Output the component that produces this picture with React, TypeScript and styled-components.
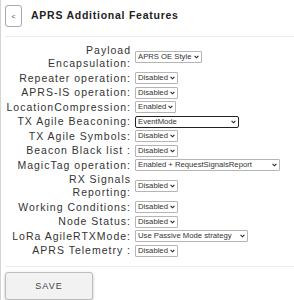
import React from "react";
import styled, { createGlobalStyle } from "styled-components";

const GlobalStyle = createGlobalStyle`
  html, body {
    margin: 0;
    padding: 0;
    background: #ffffff;
    font-family: "Liberation Sans", Arial, sans-serif;
  }
`;

const Page = styled.div`
  width: 294px;
  height: 300px;
  box-sizing: border-box;
  border-left: 1px solid #d4d4d4;
  padding: 5px 0 0 4px;
  overflow: hidden;
`;

const Header = styled.div`
  display: flex;
  align-items: center;
  gap: 9px;
  padding-bottom: 9px;
  border-bottom: 1px solid #ececec;
`;

const BackButton = styled.button`
  width: 17px;
  height: 22px;
  padding: 0;
  border: 1px solid #a8a8a8;
  border-radius: 3px;
  background: #ffffff;
  color: #555;
  font-size: 7px;
  font-family: "Liberation Sans", Arial, sans-serif;
`;

const Title = styled.h1`
  margin: 0 0 3px 0;
  font-size: 10.5px;
  font-weight: bold;
  letter-spacing: 0.75px;
  color: #222;
`;

const Form = styled.div`
  display: grid;
  grid-template-columns: 126px auto;
  column-gap: 4px;
  row-gap: 1.5px;
  align-items: center;
  padding: 7px 0 9px 0;
  border-bottom: 1px solid #ececec;
`;

const Label = styled.label`
  text-align: right;
  white-space: nowrap;
  font-size: 10.5px;
  line-height: 13px;
  letter-spacing: 1px;
  color: #333;
`;

const SelectBox = styled.div<{ $w: number; $focus?: boolean }>`
  position: relative;
  justify-self: start;
  width: ${(p) => p.$w}px;
  height: 12px;
  box-sizing: border-box;
  border: 1px solid ${(p) => (p.$focus ? "#222" : "#b5b5b5")};
  border-radius: ${(p) => (p.$focus ? "2px" : "1px")};
  background: #fff;
`;

const NativeSelect = styled.select`
  appearance: none;
  display: block;
  width: 100%;
  height: 10px;
  margin: 0;
  padding: 0 0 0 2px;
  border: none;
  outline: none;
  background: transparent;
  font-size: 7.7px;
  line-height: 10px;
  font-family: "Liberation Sans", Arial, sans-serif;
  color: #333;
`;

const Chevron = styled.svg`
  position: absolute;
  right: 2px;
  top: 3px;
  width: 5px;
  height: 4px;
  pointer-events: none;
`;

const SaveButton = styled.button`
  margin-top: 5px;
  width: 88px;
  height: 28px;
  border: 1px solid #bdbdbd;
  border-radius: 3px;
  background: #f2f2f2;
  box-shadow: 0 1px 3px rgba(0, 0, 0, 0.25);
  font-family: "Liberation Sans", Arial, sans-serif;
  font-size: 9px;
  letter-spacing: 1px;
  color: #444;
`;

type Row = { label: React.ReactNode; value: string; w: number; focus?: boolean };

const rows: Row[] = [
  { label: <>Payload<br />Encapsulation:</>, value: "APRS OE Style", w: 67 },
  { label: "Repeater operation:", value: "Disabled", w: 43 },
  { label: "APRS-IS operation:", value: "Disabled", w: 43 },
  { label: "LocationCompression:", value: "Enabled", w: 41 },
  { label: "TX Agile Beaconing:", value: "EventMode", w: 104, focus: true },
  { label: "TX Agile Symbols:", value: "Disabled", w: 43 },
  { label: "Beacon Black list :", value: "Disabled", w: 43 },
  { label: "MagicTag operation:", value: "Enabled + RequestSignalsReport", w: 145 },
  { label: <>RX Signals<br />Reporting:</>, value: "Disabled", w: 43 },
  { label: "Working Conditions:", value: "Disabled", w: 43 },
  { label: "Node Status:", value: "Disabled", w: 43 },
  { label: "LoRa AgileRTXMode:", value: "Use Passive Mode strategy", w: 113 },
  { label: "APRS Telemetry :", value: "Disabled", w: 43 },
];

function Dropdown({ value, w, focus }: { value: string; w: number; focus?: boolean }) {
  return (
    <SelectBox $w={w} $focus={focus}>
      <NativeSelect defaultValue={value}>
        <option>{value}</option>
      </NativeSelect>
      <Chevron viewBox="0 0 5 4">
        <path d="M0.6 0.8 L2.5 2.8 L4.4 0.8" fill="none" stroke="#222" strokeWidth="1.1" />
      </Chevron>
    </SelectBox>
  );
}

export default function App() {
  return (
    <>
      <GlobalStyle />
      <Page>
        <Header>
          <BackButton>&lt;</BackButton>
          <Title>APRS Additional Features</Title>
        </Header>
        <Form>
          {rows.map((r, i) => (
            <React.Fragment key={i}>
              <Label>{r.label}</Label>
              <Dropdown value={r.value} w={r.w} focus={r.focus} />
            </React.Fragment>
          ))}
        </Form>
        <SaveButton>SAVE</SaveButton>
      </Page>
    </>
  );
}
